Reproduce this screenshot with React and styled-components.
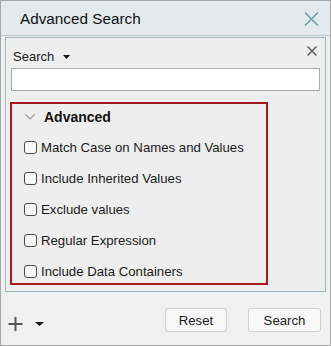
import React from "react";
import styled, { createGlobalStyle } from "styled-components";

const GlobalStyle = createGlobalStyle`
  body {
    margin: 0;
    font-family: "Liberation Sans", Arial, sans-serif;
    color: #1a1a1a;
  }
`;

const Window = styled.div`
  width: 331px;
  height: 346px;
  box-sizing: border-box;
  border: 1px solid #a6a6a6;
  background: #f0f0f0;
  display: flex;
  flex-direction: column;
`;

const TitleBar = styled.div`
  height: 35px;
  box-sizing: border-box;
  border-bottom: 1px solid #b9c6ca;
  background: #e2eaed;
  display: flex;
  align-items: center;
  justify-content: space-between;
  padding: 1px 11px 0 19px;
`;

const Title = styled.div`
  font-size: 15.3px;
  color: #111;
`;

const Panel = styled.div`
  margin: 1px 4px 0 4px;
  height: 255px;
  box-sizing: border-box;
  border: 1px solid #9cb6bc;
  background: #eeeeee;
  padding: 0 5px;
  display: flex;
  flex-direction: column;
`;

const PanelHeader = styled.div`
  height: 26px;
  display: flex;
  justify-content: space-between;
  padding: 0 3px 0 2px;
`;

const SearchMenu = styled.div`
  margin-top: 11px;
  height: 16px;
  display: flex;
  align-items: center;
  gap: 9px;
  font-size: 13px;
  line-height: 16px;
`;

const CloseSmall = styled.svg`
  margin-top: 8px;
`;

const SearchInput = styled.input`
  margin-top: 4px;
  height: 23px;
  box-sizing: border-box;
  border: 1px solid #ababab;
  background: #fff;
  outline: none;
  padding: 0 4px;
`;

const Highlight = styled.div`
  margin: 11px 0 0 -1px;
  width: 258px;
  height: 183px;
  box-sizing: border-box;
  border: 2px solid #a3171f;
  display: flex;
  flex-direction: column;
  padding: 0 0 0 12px;
`;

const GroupHeader = styled.div`
  height: 25px;
  display: flex;
  align-items: center;
  gap: 9px;
  font-size: 14px;
  font-weight: bold;
  color: #111;
  padding-left: 1px;
`;

const Options = styled.div`
  margin-top: 8px;
  display: flex;
  flex-direction: column;
  gap: 11px;
`;

const Option = styled.label`
  height: 20px;
  display: flex;
  align-items: center;
  gap: 4px;
  font-size: 13.2px;
  color: #1a1a1a;
`;

const Box = styled.span`
  width: 13px;
  height: 13px;
  box-sizing: border-box;
  border: 1px solid #4a4a4a;
  border-radius: 3px;
  background: #f9f9f9;
  flex: none;
`;

const Footer = styled.div`
  flex: 1;
  display: flex;
  align-items: flex-start;
  justify-content: space-between;
  padding: 16px 9px 0 7px;
`;

const Tools = styled.div`
  margin-top: 9px;
  display: flex;
  align-items: center;
  gap: 12px;
`;

const Buttons = styled.div`
  display: flex;
  gap: 21px;
`;

const Button = styled.button`
  width: ${(p) => p.w}px;
  height: 24px;
  box-sizing: border-box;
  border: 1px solid #cfcfcf;
  border-radius: 3px;
  background: #f8f8f8;
  font-family: "Liberation Sans", Arial, sans-serif;
  font-size: 13.2px;
  color: #1a1a1a;
  padding: 0;
`;

const Triangle = ({ w = 7, h = 4 }) => (
  <svg width={w} height={h} viewBox={`0 0 ${w} ${h}`}>
    <polygon points={`0,0 ${w},0 ${w / 2},${h}`} fill="#111" />
  </svg>
);

const options = [
  "Match Case on Names and Values",
  "Include Inherited Values",
  "Exclude values",
  "Regular Expression",
  "Include Data Containers",
];

export default function App() {
  return (
    <>
      <GlobalStyle />
      <Window>
        <TitleBar>
          <Title>Advanced Search</Title>
          <svg width="15" height="14" viewBox="0 0 15 14">
            <path d="M1 0.5 L14 13.5 M14 0.5 L1 13.5" stroke="#6fa0a8" strokeWidth="1.6" fill="none" />
          </svg>
        </TitleBar>
        <Panel>
          <PanelHeader>
            <SearchMenu>
              Search
              <Triangle />
            </SearchMenu>
            <CloseSmall width="10" height="10" viewBox="0 0 10 10">
              <path d="M0.5 0.5 L9.5 9.5 M9.5 0.5 L0.5 9.5" stroke="#555" strokeWidth="1.3" fill="none" />
            </CloseSmall>
          </PanelHeader>
          <SearchInput />
          <Highlight>
            <GroupHeader>
              <svg width="10" height="6" viewBox="0 0 10 6">
                <polyline points="0.5,0.5 5,5 9.5,0.5" stroke="#9a9a9a" strokeWidth="1.2" fill="none" />
              </svg>
              Advanced
            </GroupHeader>
            <Options>
              {options.map((o) => (
                <Option key={o}>
                  <Box />
                  {o}
                </Option>
              ))}
            </Options>
          </Highlight>
        </Panel>
        <Footer>
          <Tools>
            <svg width="15" height="14" viewBox="0 0 15 14">
              <path d="M7.5 0 V14 M0.5 7 H14.5" stroke="#555" strokeWidth="2" fill="none" />
            </svg>
            <Triangle w={9} h={4} />
          </Tools>
          <Buttons>
            <Button w={62}>Reset</Button>
            <Button w={73}>Search</Button>
          </Buttons>
        </Footer>
      </Window>
    </>
  );
}
